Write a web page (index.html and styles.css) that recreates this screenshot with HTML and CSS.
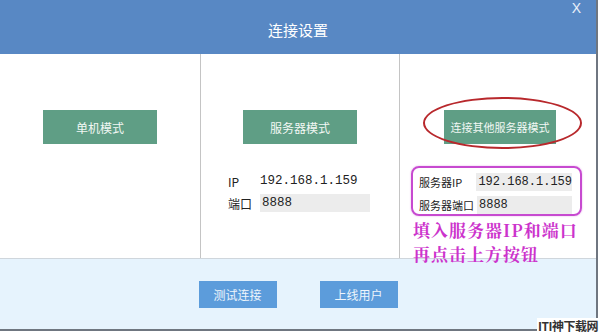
FILE: index.html
```html
<!DOCTYPE html>
<html lang="zh-CN">
<head>
    <meta charset="UTF-8">
    <title>连接设置</title>
    <link rel="stylesheet" href="styles.css">
</head>
<body>
    <div class="dialog">
        <div class="header">
            <span class="title">连接设置</span>
            <span class="close">X</span>
        </div>
        <div class="columns">
            <div class="col">
                <button class="mode-btn">单机模式</button>
            </div>
            <div class="col">
                <button class="mode-btn">服务器模式</button>
                <div class="fields">
                    <div class="row">
                        <span class="label">IP</span>
                        <span class="value">192.168.1.159</span>
                    </div>
                    <div class="row">
                        <span class="label">端口</span>
                        <span class="value boxed">8888</span>
                    </div>
                </div>
            </div>
            <div class="col">
                <div class="circled">
                    <button class="mode-btn long">连接其他服务器模式</button>
                    <span class="ellipse"></span>
                </div>
                <div class="fields marked">
                    <div class="row">
                        <span class="label wide">服务器IP</span>
                        <span class="value boxed">192.168.1.159</span>
                    </div>
                    <div class="row">
                        <span class="label wide">服务器端口</span>
                        <span class="value boxed">8888</span>
                    </div>
                </div>
                <p class="note">填入服务器IP和端口<br>再点击上方按钮</p>
            </div>
        </div>
        <div class="footer">
            <button class="foot-btn">测试连接</button>
            <button class="foot-btn">上线用户</button>
        </div>
    </div>
    <div class="mark">ITI神下载网</div>
</body>
</html>
```

FILE: styles.css
```css
body {
    margin: 0;
    width: 600px;
    height: 333px;
    overflow: hidden;
    background: #ffffff;
    font-family: "Noto Sans CJK SC", "Noto Sans", sans-serif;
    position: relative;
}
.dialog {
    width: 596px;
    height: 329px;
    border-right: 2px solid #6f7680;
    border-bottom: 2px solid #6f7680;
    display: flex;
    flex-direction: column;
}
.header {
    height: 54px;
    background: #5888c4;
    color: #ffffff;
    display: flex;
    align-items: center;
    justify-content: center;
    position: relative;
}
.title {
    font-size: 15px;
    margin-top: 4px;
}
.close {
    position: absolute;
    right: 15px;
    top: 0;
    font-family: "Liberation Sans", sans-serif;
    font-size: 14px;
    color: #e8f0fa;
}
.columns {
    height: 204px;
    display: flex;
    border-bottom: 1px solid #cfd6dc;
}
.col {
    width: 201px;
    border-right: 1px solid #c4c4c4;
    display: flex;
    flex-direction: column;
    align-items: center;
    padding-top: 56px;
    box-sizing: border-box;
}
.col:nth-child(2) {
    width: 199px;
}
.col:last-child {
    border-right: none;
    width: 196px;
}
.mode-btn {
    width: 114px;
    height: 34px;
    border: none;
    background: #5f9e85;
    color: #f2f8f4;
    font-family: "Noto Sans CJK SC", sans-serif;
    font-size: 12px;
    padding: 0;
    white-space: nowrap;
}
.mode-btn.long {
    width: 112px;
    font-size: 11px;
}
.fields {
    margin-top: 28px;
    width: 142px;
    display: flex;
    flex-direction: column;
    gap: 4px;
    align-self: flex-start;
    margin-left: 27px;
}
.row {
    display: flex;
    align-items: center;
    height: 18px;
    font-size: 12px;
    color: #222222;
    white-space: nowrap;
}
.label {
    width: 32px;
    font-family: "Noto Sans CJK SC", sans-serif;
}
.label.wide {
    width: 58px;
    font-size: 11px;
}
.value {
    font-family: "Liberation Mono", monospace;
    font-size: 12.5px;
    height: 18px;
    line-height: 18px;
    flex-grow: 1;
}
.value.boxed {
    background: #ececec;
    padding-left: 2px;
}
.circled {
    position: relative;
    margin-left: 4px;
}
.ellipse {
    position: absolute;
    left: -21px;
    top: -13px;
    width: 155px;
    height: 48px;
    border: 2px solid #b8282c;
    border-radius: 50%;
}
.fields.marked {
    margin: 22px 0 0 11px;
    width: 171px;
    height: 56px;
    padding: 5px 8px 0 6px;
    box-sizing: border-box;
    border: 2px solid #c74ad0;
    border-radius: 8px;
    box-shadow: 0 0 2px #e3a6e8;
    gap: 5px;
}
.fields.marked .value {
    font-size: 12px;
}
.note {
    margin: 2px 0 0 13px;
    align-self: flex-start;
    font-family: "Noto Serif CJK SC", "Noto Sans CJK SC", serif;
    font-weight: bold;
    font-size: 17px;
    letter-spacing: 1px;
    line-height: 24px;
    color: #cc33cc;
    position: relative;
    z-index: 1;
    white-space: nowrap;
}
.footer {
    flex-grow: 1;
    background: #e6f3fd;
    display: flex;
    justify-content: center;
    align-items: center;
    gap: 43px;
    padding-top: 1px;
}
.foot-btn {
    width: 78px;
    height: 27px;
    border: none;
    background: #5c9cdb;
    color: #eef5fc;
    font-family: "Noto Sans CJK SC", sans-serif;
    font-size: 12px;
    padding: 0;
}
.mark {
    position: absolute;
    right: 0;
    bottom: 0;
    font-size: 12px;
    font-weight: bold;
    letter-spacing: -0.5px;
    color: #333333;
    background: #ffffff;
    line-height: 15px;
    padding: 0 2px 0 1px;
}
```
